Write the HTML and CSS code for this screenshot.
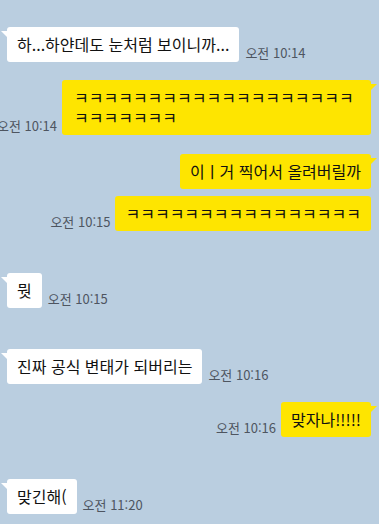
FILE: index.html
```html
<!DOCTYPE html>
<html lang="ko">
<head>
<meta charset="utf-8">
<link rel="stylesheet" href="styles.css">
</head>
<body>
<div class="chat">
  <div class="row left first">
    <div class="bubble white tail">하...하얀데도 눈처럼 보이니까...</div>
    <span class="time">오전 10:14</span>
  </div>
  <div class="row right gap-m">
    <span class="time">오전 10:14</span>
    <div class="bubble yellow tail wrap">ㅋㅋㅋㅋㅋㅋㅋㅋㅋㅋㅋㅋㅋㅋㅋㅋㅋㅋㅋㅋㅋㅋㅋㅋㅋㅋ</div>
  </div>
  <div class="row right gap-m2">
    <div class="bubble yellow tail">이ㅣ거 찍어서 올려버릴까</div>
  </div>
  <div class="row right gap-s">
    <span class="time">오전 10:15</span>
    <div class="bubble yellow">ㅋㅋㅋㅋㅋㅋㅋㅋㅋㅋㅋㅋㅋㅋㅋㅋ</div>
  </div>
  <div class="row left gap-l">
    <div class="bubble white tail">뭣</div>
    <span class="time">오전 10:15</span>
  </div>
  <div class="row left gap-l2">
    <div class="bubble white tail">진짜 공식 변태가 되버리는</div>
    <span class="time">오전 10:16</span>
  </div>
  <div class="row right gap-m">
    <span class="time">오전 10:16</span>
    <div class="bubble yellow tail">맞자나!!!!!</div>
  </div>
  <div class="row left gap-l">
    <div class="bubble white tail">맞긴해(</div>
    <span class="time">오전 11:20</span>
  </div>
</div>
</body>
</html>
```
FILE: styles.css
```css
html, body {
  margin: 0;
  padding: 0;
}
body {
  background: #bacee0;
  width: 379px;
  height: 524px;
  overflow: hidden;
  font-family: "Noto Sans CJK KR", "Noto Sans", sans-serif;
  color: #111;
}
.chat {
  display: flex;
  flex-direction: column;
}
.row {
  display: flex;
  align-items: flex-end;
  gap: 6px;
}
.row.left {
  justify-content: flex-start;
  padding-left: 7px;
}
.row.right {
  justify-content: flex-end;
  padding-right: 8px;
  gap: 5px;
}
.first { margin-top: 27px; }
.gap-s { margin-top: 7px; }
.gap-m { margin-top: 18px; }
.gap-m2 { margin-top: 19px; }
.gap-l { margin-top: 42px; }
.gap-l2 { margin-top: 41px; }

.bubble {
  position: relative;
  flex-shrink: 0;
  box-sizing: border-box;
  font-size: 16px;
  line-height: 20px;
  padding: 7px 10px 8px;
  border-radius: 3px;
  white-space: nowrap;
}
.bubble.wrap {
  white-space: normal;
  max-width: 309px;
  padding-left: 12px;
  word-break: break-all;
}
.white { background: #ffffff; }
.yellow { background: #fee500; }

.tail::before {
  content: "";
  position: absolute;
  top: 4px;
  width: 0;
  height: 0;
  border-top: 6px solid transparent;
}
.white.tail::before {
  left: -6px;
  border-top-color: #ffffff;
  border-left: 6px solid transparent;
}
.yellow.tail::before {
  right: -6px;
  border-top-color: #fee500;
  border-right: 6px solid transparent;
}

.time {
  flex-shrink: 0;
  font-size: 13px;
  line-height: 15px;
  margin-bottom: 2px;
  color: #4e5560;
  white-space: nowrap;
}
```
